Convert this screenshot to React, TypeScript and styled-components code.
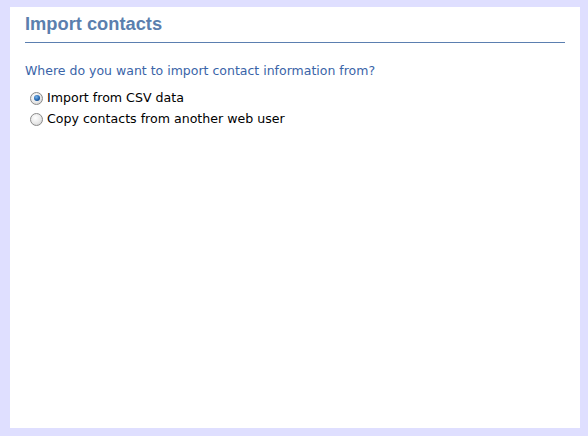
import React from "react";
import styled, { createGlobalStyle } from "styled-components";

const Global = createGlobalStyle`
  html, body { margin: 0; padding: 0; background: #dfdfff; }
  body { width: 588px; height: 436px; overflow: hidden; }
`;

const Frame = styled.div`
  box-sizing: border-box;
  width: 588px;
  height: 436px;
  padding: 7px 8px 8px 10px;
  background: #dfdfff;
`;

const Panel = styled.div`
  box-sizing: border-box;
  height: 100%;
  background: #ffffff;
  padding: 5px 15px 0 15px;
  font-family: "DejaVu Sans", Verdana, sans-serif;
`;

const Title = styled.h1`
  margin: 0;
  padding: 0 0 6px 0;
  font-family: "Liberation Sans", Arial, sans-serif;
  font-size: 18.3px;
  font-weight: bold;
  line-height: 24px;
  color: #5b7fae;
  border-bottom: 1px solid #5b7fb0;
`;

const Question = styled.p`
  margin: 20px 0 0 0;
  font-size: 12.5px;
  line-height: 16px;
  color: #3a64a8;
`;

const Options = styled.div`
  display: flex;
  flex-direction: column;
  gap: 5px;
  margin: 11px 0 0 5px;
`;

const Option = styled.label`
  display: flex;
  align-items: center;
  gap: 4px;
  font-size: 12.6px;
  line-height: 16px;
  color: #000000;
`;

const Radio = styled.span<{ $checked?: boolean }>`
  box-sizing: border-box;
  width: 13px;
  height: 13px;
  border-radius: 50%;
  border: 1px solid #8a8a8a;
  background: radial-gradient(circle at 40% 35%, #ffffff 0%, #e8e8e8 55%, #c8c8c8 100%);
  display: flex;
  align-items: center;
  justify-content: center;
  &::after {
    content: "";
    display: ${(p) => (p.$checked ? "block" : "none")};
    width: 6px;
    height: 6px;
    border-radius: 50%;
    background: radial-gradient(circle at 40% 35%, #7ab6ec 0%, #1e5fa8 60%, #0c3a78 100%);
  }
`;

export default function App() {
  return (
    <>
      <Global />
      <Frame>
        <Panel>
          <Title>Import contacts</Title>
          <Question>Where do you want to import contact information from?</Question>
          <Options>
            <Option>
              <Radio $checked />
              Import from CSV data
            </Option>
            <Option>
              <Radio />
              Copy contacts from another web user
            </Option>
          </Options>
        </Panel>
      </Frame>
    </>
  );
}
